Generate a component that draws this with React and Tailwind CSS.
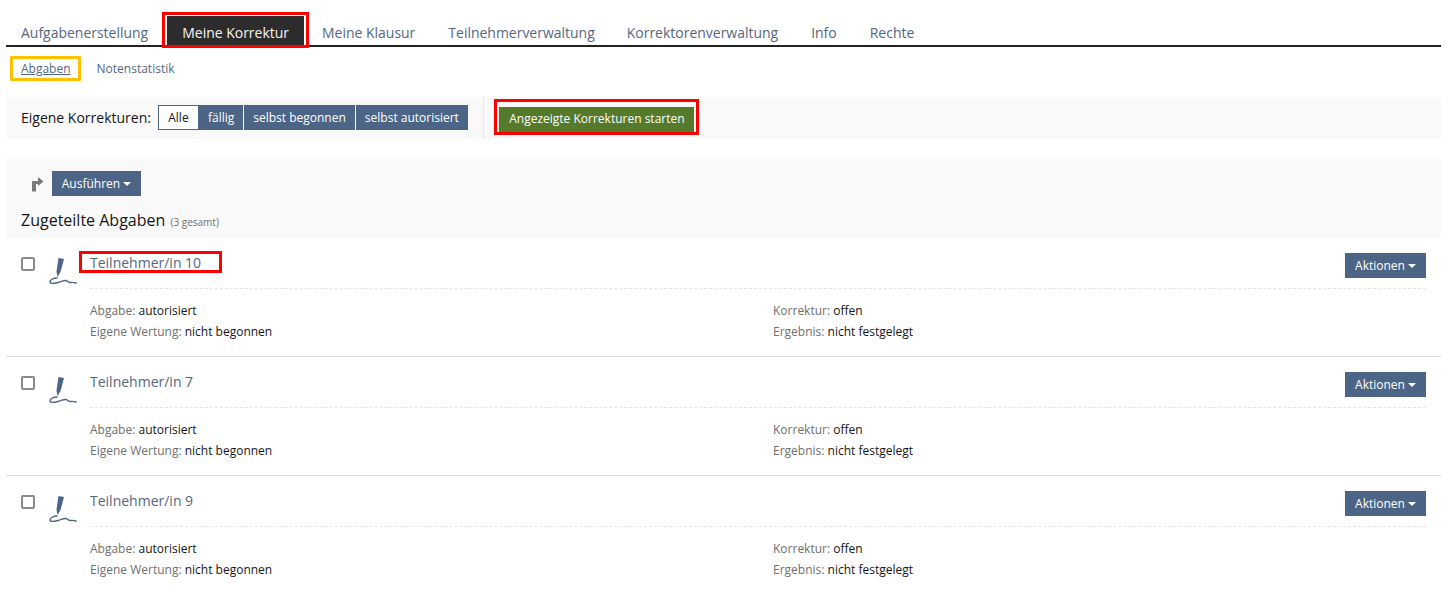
import React from "react";

const tabs = [
  { label: "Aufgabenerstellung", gap: "mr-[4px]" },
  { label: "Meine Korrektur", gap: "mr-[3px]" },
  { label: "Meine Klausur", gap: "mr-[3px]" },
  { label: "Teilnehmerverwaltung", gap: "mr-[2px]" },
  { label: "Korrektorenverwaltung", gap: "mr-[3px]" },
  { label: "Info", gap: "mr-[3px]" },
  { label: "Rechte", gap: "mr-[3px]" },
];
const filters = ["fällig", "selbst begonnen", "selbst autorisiert"];

const Caret = () => <span className="ml-[3px] inline-block h-0 w-0 border-x-4 border-t-4 border-x-transparent border-t-current align-middle" />;

const PenIcon = () => (
  <svg width="28" height="28" viewBox="0 0 28 28" className="shrink-0">
    <path d="M9.5 1 L15 2 L11.5 15 L8.5 20 L7.5 14.5 Z" fill="#4c6586" />
    <path d="M8 21 C4 21 1 23 1 25 C1 27 5 26.5 9 25.5 C12 24.8 15 23 17 23.5 C19 24 19 26 21.5 25.5 C23 25.2 24 25 27 26" fill="none" stroke="#4c6586" strokeWidth="1.4" strokeLinecap="round" />
  </svg>
);

const Prop = ({ label, value }) => (
  <div className="h-[21px] leading-[21px]">
    <span className="text-[#6f6f6f]">{label}: </span>
    <span className="text-[#161616]">{value}</span>
  </div>
);

const Row = ({ name, boxed }) => (
  <div className="relative flex h-[119px] border-b border-[#dcdcdc] pl-[15px] pr-[15px] last:border-b-0">
    <input type="checkbox" className="mt-[19px] h-[14px] w-[14px] appearance-none rounded-[2px] border-2 border-[#8a8a8a] bg-white" />
    <div className="ml-[14px] mt-[19px]">
      <PenIcon />
    </div>
    <div className="ml-[13px] flex-1">
      <div className="flex h-[51px] justify-between border-b border-dashed border-[#e4e4e4]">
        <div className="relative mt-[14px] h-[21px] text-[14px] leading-[21px] text-[#55677f]">
          {name}
          {boxed && <div className="absolute left-[-11px] top-[-1px] h-[22px] w-[143px] border-[3px] border-[#ff0000]" />}
        </div>
        <button className="mt-[15px] h-[25px] w-[81px] bg-[#4c6586] text-[12px] text-white">
          Aktionen
          <Caret />
        </button>
      </div>
      <div className="mt-[11px] grid grid-cols-2 text-[12px]">
        <div>
          <Prop label="Abgabe" value="autorisiert" />
          <Prop label="Eigene Wertung" value="nicht begonnen" />
        </div>
        <div className="pl-[15px]">
          <Prop label="Korrektur" value="offen" />
          <Prop label="Ergebnis" value="nicht festgelegt" />
        </div>
      </div>
    </div>
  </div>
);

export default function App() {
  return (
    <div className="h-[596px] overflow-hidden bg-white pl-[6px] pr-[12px] pt-[16px] font-['Open_Sans',sans-serif]">
      {/* Tabs */}
      <div className="flex h-[31px] border-b-2 border-[#222222]">
        {tabs.map((t) => {
          const active = t.label === "Meine Korrektur";
          return (
            <div
              key={t.label}
              className={`relative ${t.gap} h-[29px] px-[15px] text-[13.97px] leading-[33px] ${active ? "bg-[#2c2c2c] text-[#f5f5f5]" : "text-[#55677f]"}`}
            >
              {t.label}
              {active && <div className="absolute left-[-5px] top-[-4px] h-[36px] w-[147px] border-[3px] border-[#ff0000]" />}
            </div>
          );
        })}
      </div>

      {/* Sub tabs */}
      <div className="flex h-[50px] items-start pl-[15px] pt-[13px] text-[12px] leading-[18px] text-[#55677f]">
        <div className="relative underline">
          Abgaben
          <div className="absolute left-[-11px] top-[-4px] h-[25px] w-[71px] rounded-[1px] border-[3px] border-[#ffc000]" />
        </div>
        <div className="ml-[26px]">Notenstatistik</div>
      </div>

      {/* Filter bar */}
      <div className="flex h-[42px] items-start bg-[#f9f9f9] pl-[15px] pt-[8px]">
        <span className="text-[14px] leading-[25px] text-[#161616]">Eigene Korrekturen:</span>
        <div className="ml-[7px] flex h-[25px] text-[12px]">
          <div className="flex w-[41px] items-center justify-center border border-[#4c6586] bg-white text-[#161616]">Alle</div>
          {filters.map((f) => (
            <div key={f} className="flex items-center border-r border-[#f9f9f9] bg-[#4c6586] px-[9px] text-white last:border-r-0">
              {f}
            </div>
          ))}
        </div>
        <div className="ml-[15px] mt-[-8px] h-[42px] w-px bg-[#e6e6e6]" />
        <div className="relative ml-[15px]">
          <button className="h-[25px] w-[195px] bg-[#557a2c] pl-[1px] text-[12px] text-white">Angezeigte Korrekturen starten</button>
          <div className="absolute left-[-5px] top-[-6px] h-[36px] w-[205px] border-[3px] border-[#ff0000]" />
        </div>
      </div>

      {/* Actions and heading */}
      <div className="mt-[20px] h-[79px] bg-[#f9f9f9] pl-[15px] pt-[12px]">
        <div className="flex items-center">
          <svg width="14" height="16" viewBox="0 0 14 16" className="ml-[10px]">
            <path d="M1 15.5 V5 H7 V1 L12.5 5.5 L7 10 V8 H5 V15.5 Z" fill="#7a7a7a" />
          </svg>
          <button className="ml-[7px] h-[25px] w-[89px] bg-[#4c6586] text-[12px] text-white">
            Ausführen
            <Caret />
          </button>
        </div>
        <div className="mt-[13px] text-[16px] leading-[22px] text-[#161616]">
          Zugeteilte Abgaben <span className="ml-[1px] text-[10px] text-[#6f6f6f]">(3 gesamt)</span>
        </div>
      </div>

      <Row name="Teilnehmer/in 10" boxed />
      <Row name="Teilnehmer/in 7" />
      <Row name="Teilnehmer/in 9" />
    </div>
  );
}
